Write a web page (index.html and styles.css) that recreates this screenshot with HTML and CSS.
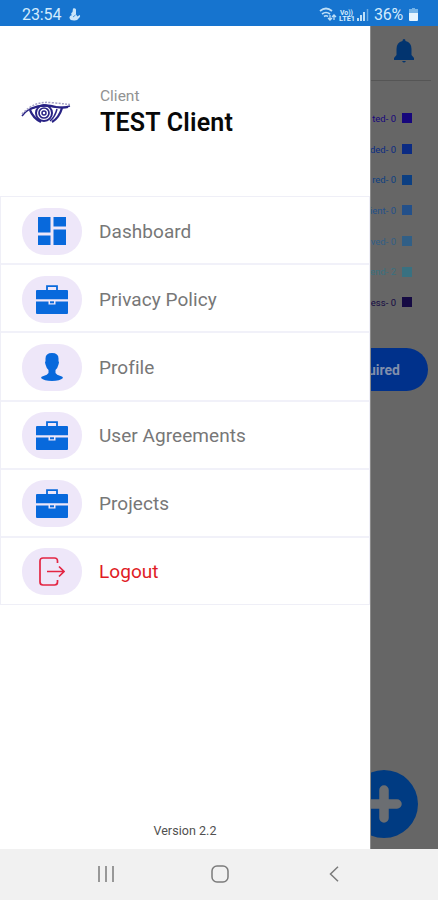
FILE: index.html
```html
<!DOCTYPE html>
<html lang="en">
<head>
<meta charset="utf-8">
<title>Client menu</title>
<link rel="stylesheet" href="styles.css">
</head>
<body>
<svg width="0" height="0" class="defs">
  <symbol id="briefcase" viewBox="0 0 32 29">
    <path d="M11 5V1.200h10V5" fill="none" stroke="#0869dc" stroke-width="1.800"/>
    <path fill="#0869dc" d="M1 5h30q1 0 1 1v8.200H0V6q0-1 1-1zM0 16.500h12.500v3h7v-3H32V28q0 1-1 1H1q-1 0-1-1z"/>
    <path fill="#0869dc" d="M14 16.300h4v2h-4z"/>
  </symbol>
</svg>
<header class="status">
  <span class="clock">23:54</span>
  <svg class="hand" width="12" height="13" viewBox="0 0 12 13" fill="#c9e5fa"><path d="M4 .5q2-1 3 1v5l1.500 2 2-1.500q1.500 1-.5 3-2 3-5 2.500-4 0-4.500-2.500Q0 8 3 7 1 6 3.500 4z"/><path d="M4 9l2.500-2" stroke="#4b96da"/></svg>
  <span class="spacer"></span>
  <svg width="50" height="15" viewBox="0 0 50 15" fill="none" stroke="#bedff7">
    <path d="M1 4q6-5 12 0M3 7q4-3 8 0M5 9.500q2-1.500 4 0" stroke-width="1.700"/><path d="M11 8v5m-2-2 2 2 2-2M15 13V8m-2 2 2-2 2 2" stroke-width="1.300"/>
    <text x="21" y="7.500" class="lte" textLength="13" lengthAdjust="spacingAndGlyphs">Vo))</text><text x="20" y="14" class="lte" textLength="16" lengthAdjust="spacingAndGlyphs">LTE1</text>
    <path d="M39 14v-3M42 14V8M45 14V5" stroke-width="2"/><path d="M48.500 14V2" stroke="#69abe3" stroke-width="1.500"/>
  </svg>
  <span class="percent">36%</span>
  <svg class="battery" width="9" height="13" viewBox="0 0 9 13"><path fill="#75b4e8" d="M3 0h3v1h3v5H0V1h3z"/><path fill="#e4f4ff" d="M0 5h9v7q0 1-1 1H1q-1 0-1-1z"/></svg>
</header>
<main class="screen">
  <aside class="drawer">
    <div class="account">
      <svg class="logo" width="50" height="26" viewBox="0 0 50 26" fill="none" stroke="#292385">
        <path d="M1 16Q6 9 14 7.500 23 5 34 7q8 1 15-1" stroke-width="1.500"/>
        <path d="M9 9Q22 3 35 7q7 1.500 12 0" stroke-width="2.200"/>
        <path d="M1 14Q13 1 29 2.500q11 1 20 2" stroke="#a5a2c6" stroke-width="1.500" stroke-dasharray="2 1.300"/>
        <path d="M9 10q3 8 11 12" stroke-width="2.200"/>
        <circle cx="23" cy="13" r="8" stroke-width="2"/>
        <circle cx="23" cy="13" r="5" stroke-width="1.700"/>
        <circle cx="23" cy="13" r="2" stroke-width="1.500"/>
        <path d="M36 9q-2 8-7 12" stroke-width="1.500"/>
        <path d="M41 8q-3 10-10 14" stroke-width="2.300"/>
      </svg>
      <div>
        <div class="role">Client</div>
        <div class="name">TEST Client</div>
      </div>
    </div>
    <nav class="menu">
      <a class="item"><span class="pill"><svg width="28" height="28" viewBox="0 0 28 28" fill="#0869dc"><path d="M0 0h12.500v15.500H0zM15.500 0H28v9.500H15.500zM0 18.500h12.500V28H0zM15.500 12.500H28V28H15.500z"/></svg></span><span>Dashboard</span></a>
      <a class="item"><span class="pill"><svg width="32" height="29"><use href="#briefcase"/></svg></span><span>Privacy Policy</span></a>
      <a class="item"><span class="pill"><svg width="22" height="28" viewBox="0 0 22 28" fill="#0869dc"><path d="M11 0q6.500 0 6.500 5.500V8q1 1 0 3.500-1 4-3 5.500V20q1 2 5 3 2.500.7 2.500 2-3 3-11 3T0 25q0-1.300 2.500-2 4-1 5-3v-3q-2-1.500-3-5.500-1-2.500 0-3.500V5.500Q4.500 0 11 0z"/></svg></span><span>Profile</span></a>
      <a class="item"><span class="pill"><svg width="32" height="29"><use href="#briefcase"/></svg></span><span>User Agreements</span></a>
      <a class="item"><span class="pill"><svg width="32" height="29"><use href="#briefcase"/></svg></span><span>Projects</span></a>
      <a class="item logout"><span class="pill"><svg width="26" height="29" viewBox="0 0 26 29" fill="none" stroke="#e32643" stroke-width="1.700"><path d="M18.500 6V4q0-3-3-3H4Q1 1 1 4v21q0 3 3 3h11.500q3 0 3-3v-2M8 14.500h16.500M20 9.500l5 5-5 5"/></svg></span><span>Logout</span></a>
    </nav>
    <div class="version">Version 2.2</div>
  </aside>
  <section class="behind">
    <div class="topbar"><svg width="20" height="24" viewBox="0 0 20 24" fill="#02346f"><path d="M10 0q1.500 0 1.500 2Q17.500 3.500 17.500 10v6l2.500 3v2H0v-2l2.500-3v-6q0-6.500 6-8Q8.500 0 10 0zM8 22h4q-2 3-4 0z"/></svg></div>
    <ul class="legend">
      <li class="c1">ted- 0<i></i></li>
      <li class="c2">ded- 0<i></i></li>
      <li class="c3">red- 0<i></i></li>
      <li class="c4">ient- 0<i></i></li>
      <li class="c5">ved- 0<i></i></li>
      <li class="c6">end- 2<i></i></li>
      <li class="c7">ess- 0<i></i></li>
    </ul>
    <div class="button">uired</div>
    <div class="fab"><svg width="36" height="38" viewBox="0 0 36 38"><path d="M18 5v28M5 19h26" stroke="#6b6e72" stroke-width="9.500" stroke-linecap="round"/></svg></div>
  </section>
</main>
<footer class="navbar">
  <svg width="16" height="16" viewBox="0 0 16 16"><path d="M1 0v16M8 0v16M15 0v16"/></svg>
  <svg width="18" height="18" viewBox="0 0 18 18"><rect x="1" y="1" width="16" height="16" rx="5"/></svg>
  <svg width="10" height="16" viewBox="0 0 10 16"><path d="M9 .7 1.500 8 9 15.300"/></svg>
</footer>
</body>
</html>
```
FILE: styles.css
```css
* { box-sizing: border-box; }
body {
  margin: 0;
  width: 438px;
  height: 900px;
  display: flex;
  flex-direction: column;
  overflow: hidden;
  font-family: Roboto, sans-serif;
  background: #fff;
}
.defs { display: none; }
.status {
  flex: none;
  height: 26px;
  display: flex;
  align-items: center;
  padding: 2px 20px 0 22px;
  background: #1674cf;
  color: #d3ebfd;
  font-size: 16px;
}
.clock { width: 47px; letter-spacing: -.1px; }
.spacer { flex: 1; }
.lte { font: 700 7px Roboto, sans-serif; fill: #d3ebfd; stroke: none; }
.percent { margin-left: 5px; width: 35px; letter-spacing: -.3px; }
.battery { display: block; }
.screen {
  flex: none;
  height: 823px;
  display: grid;
  grid-template-columns: 370px 68px;
}
.drawer { display: flex; flex-direction: column; background: #fff; }
.account {
  height: 170px;
  display: flex;
  align-items: center;
  gap: 29px;
  padding: 3px 0 0 21px;
}
.role { font-size: 15.500px; line-height: 20px; color: #929292; }
.name { font-size: 25px; font-weight: 600; line-height: 34px; color: #080808; letter-spacing: .2px; white-space: nowrap; }
.menu { border: 1px solid #efeff7; border-bottom: 0; }
.item {
  height: 68.200px;
  display: flex;
  align-items: center;
  gap: 17px;
  padding: 2px 0 0 21px;
  border-bottom: 2px solid #f1f1f9;
  color: #777;
  font-size: 19px;
  letter-spacing: .05px;
}
.item:last-child { border-bottom: 1px solid #efeff7; height: 67px; }
.pill {
  width: 60px;
  height: 47px;
  display: flex;
  align-items: center;
  justify-content: center;
  border-radius: 23px;
  background: #eee7f9;
}
.item.logout { color: #e01b25; }
.version {
  margin-top: auto;
  padding-bottom: 10px;
  text-align: center;
  font-size: 12.500px;
  line-height: 17px;
  color: #505050;
  letter-spacing: .05px;
}
.behind {
  display: flex;
  flex-direction: column;
  overflow: hidden;
  background: #666;
  border-left: 1px solid #8b8b8b;
}
.topbar {
  flex: none;
  height: 55px;
  width: 60px;
  padding: 13px 0 0 23px;
  border-bottom: 1px solid #555;
}
.legend { margin: 22px 26px 0 -20px; padding: 0; list-style: none; }
.legend li {
  height: 30.700px;
  display: flex;
  align-items: center;
  justify-content: flex-end;
  gap: 6px;
  font-size: 9.500px;
  white-space: nowrap;
}
.legend i { width: 10px; height: 10px; background: currentColor; }
.c1 { color: #16067c; }
.c2 { color: #0b2b83; }
.c3 { color: #0c3f82; }
.c4 { color: #23508a; }
.c5 { color: #315f86; }
.c6 { color: #397181; }
.c7 { color: #150a43; }
.button {
  margin: 30px 10px 0 -60px;
  height: 43px;
  border-radius: 22px;
  background: #00318b;
  color: #818fac;
  font-size: 14px;
  font-weight: 700;
  line-height: 45px;
  text-align: right;
  padding-right: 28px;
}
.fab {
  margin: auto 0 11px -21px;
  width: 68px;
  height: 68px;
  border-radius: 50%;
  background: #003b82;
  display: flex;
  align-items: center;
  justify-content: center;
}
.navbar {
  flex: 1;
  display: flex;
  align-items: center;
  justify-content: space-between;
  padding: 0 99px 2px 98px;
  background: #f1f1f1;
}
.navbar svg:nth-child(2) { margin-right: 4px; }
.navbar svg { fill: none; stroke: #7b7b7b; stroke-width: 1.500px; }
```
